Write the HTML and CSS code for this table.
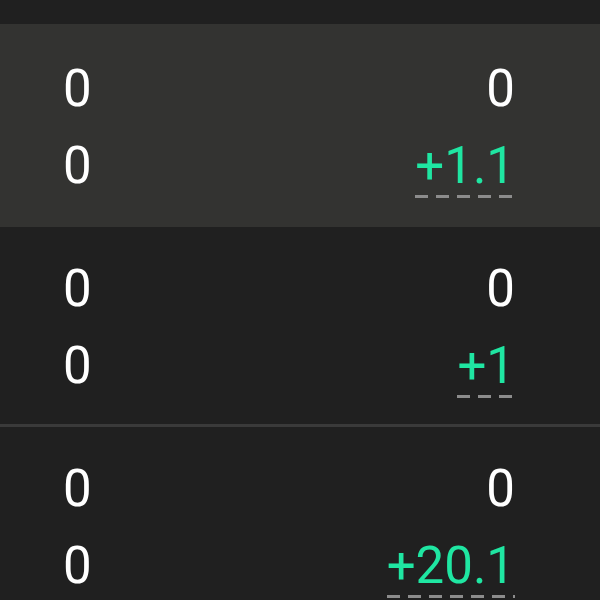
FILE: index.html
```html
<!DOCTYPE html>
<html lang="en">
<head>
  <meta charset="UTF-8" />
  <meta name="viewport" content="width=device-width, initial-scale=1.0"/>
  <title>Scores</title>
  <link rel="stylesheet" href="styles.css">
</head>
<body>

  <div class="top-stub"></div>

  <div class="score-row active">
    <div class="line">
      <span class="val">0</span>
      <span class="val">0</span>
    </div>
    <div class="line">
      <span class="val">0</span>
      <span class="val diff">+1.1</span>
    </div>
  </div>

  <div class="score-row">
    <div class="line">
      <span class="val">0</span>
      <span class="val">0</span>
    </div>
    <div class="line">
      <span class="val">0</span>
      <span class="val diff">+1</span>
    </div>
  </div>

  <div class="score-row">
    <div class="line">
      <span class="val">0</span>
      <span class="val">0</span>
    </div>
    <div class="line">
      <span class="val">0</span>
      <span class="val diff">+20.1</span>
    </div>
  </div>

</body>
</html>
```

FILE: styles.css
```css
* {
  box-sizing: border-box;
  margin: 0;
  padding: 0;
}

body {
  background: #202020;
  color: #ffffff;
  font-family: Roboto, "Noto Sans", sans-serif;
  font-size: 51px;
  line-height: 60px;
}

.top-stub {
  height: 24px;
}

.score-row {
  height: 200px;
  padding: 32px 85px 0 63px;
  border-bottom: 3px solid #3a3a3a;
  display: flex;
  flex-direction: column;
  gap: 17px;
}

.score-row.active {
  height: 203px;
  background: #333331;
  border-top: 3px solid #333331;
  border-bottom-color: #333331;
}

.line {
  display: flex;
  justify-content: space-between;
  align-items: baseline;
}

.val {
  display: inline-block;
}

.diff {
  color: #1fe6a2;
  padding-bottom: 2px;
  background-image: repeating-linear-gradient(to right, #8c8c8c 0 13px, transparent 13px 21px);
  background-size: 100% 3px;
  background-position: left bottom;
  background-repeat: no-repeat;
}
```
